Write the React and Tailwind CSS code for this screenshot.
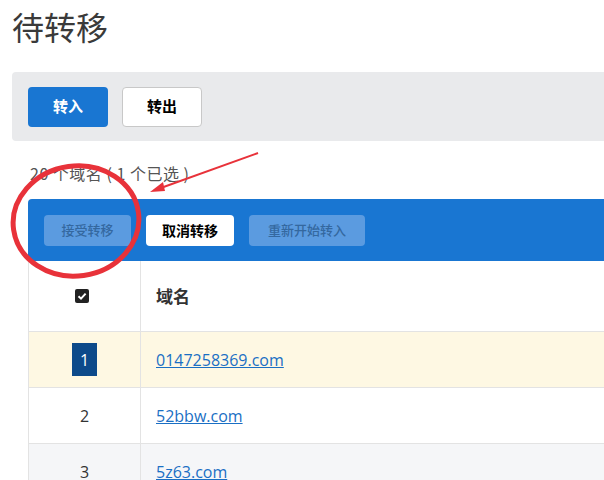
import React from 'react';

const rows = [
    { n: 1, domain: '0147258369.com', selected: true },
    { n: 2, domain: '52bbw.com' },
    { n: 3, domain: '5z63.com' },
];

const cjk = { fontFamily: '"Noto Sans CJK SC", "Open Sans", sans-serif' };

const App = () => {
    return (
        <div className="relative w-[604px] h-[480px] overflow-hidden bg-white text-[#333]" style={cjk}>
            <div className="pl-[12px]">
                {/* Title */}
                <h1 className="pt-[4px] h-[72px] text-[32px] leading-[44px] font-normal text-[#3a3a3a]">待转移</h1>

                {/* Transfer direction bar */}
                <div className="w-[700px] h-[69px] bg-[#e9eaec] rounded-[4px] flex items-center gap-[14px] px-[16px]">
                    <button className="w-[80px] h-[40px] rounded-[4px] bg-[#1976d2] text-white text-[15px] font-bold">转入</button>
                    <button className="w-[80px] h-[40px] rounded-[4px] bg-white border border-[#c8c8c8] text-black text-[15px] font-bold">转出</button>
                </div>

                <div className="pl-[16px]">
                    <p className="mt-[21px] h-[37px] pl-[2px] text-[16px] leading-[22px] text-[#555] tracking-[0.5px]">20 个域名 ( 1 个已选 )</p>

                    {/* Action bar */}
                    <div className="w-[700px] h-[62px] bg-[#1976d2] rounded-tl-[4px] flex items-center gap-[15px] px-[16px]">
                        <button className="w-[87px] h-[31px] rounded-[4px] bg-[#5b9be0] text-[#34689f] text-[13px] font-medium">接受转移</button>
                        <button className="w-[88px] h-[31px] rounded-[4px] bg-white text-black text-[14px] font-bold">取消转移</button>
                        <button className="w-[116px] h-[31px] rounded-[4px] bg-[#5b9be0] text-[#34689f] text-[13px] font-medium">重新开始转入</button>
                    </div>

                    {/* Table */}
                    <div className="w-[700px] border-l border-[#e3e3e3]">
                        <div className="flex h-[71px] border-b border-[#e3e3e3]">
                            <div className="w-[112px] flex items-center justify-center pr-[6px] border-r border-[#e3e3e3]">
                                <span className="w-[14px] h-[14px] rounded-[2px] bg-[#222] flex items-center justify-center">
                                    <svg width="10" height="10" viewBox="0 0 10 10">
                                        <path d="M1.5 5.2 L4 7.6 L8.6 2.6" stroke="white" strokeWidth="2" fill="none" />
                                    </svg>
                                </span>
                            </div>
                            <div className="flex items-center pl-[15px] text-[17px] font-bold text-[#333]">域名</div>
                        </div>
                        {rows.map((row, i) => (
                            <div
                                key={row.n}
                                className={`flex h-[56px] border-b border-[#e3e3e3] ${row.selected ? 'bg-[#fef8e3]' : i % 2 === 0 ? 'bg-[#f5f6f8]' : 'bg-white'}`}
                            >
                                <div className="w-[112px] flex items-center justify-center border-r border-[#e3e3e3]" style={{ fontFamily: '"Open Sans", sans-serif' }}>
                                    {row.selected ? (
                                        <span className="w-[25px] h-[33px] bg-[#0d4a8a] text-white text-[16px] flex items-center justify-center">{row.n}</span>
                                    ) : (
                                        <span className="text-[16px] text-[#333]">{row.n}</span>
                                    )}
                                </div>
                                <div className="flex items-center pl-[15px]">
                                    <a href="#" className="text-[16px] text-[#1a6fc4] underline" style={{ fontFamily: '"Open Sans", sans-serif' }}>{row.domain}</a>
                                </div>
                            </div>
                        ))}
                    </div>
                </div>
            </div>

            {/* Red annotation: circle and arrow */}
            <svg className="absolute left-0 top-0 pointer-events-none" width="604" height="480">
                <ellipse cx="76" cy="221" rx="63" ry="55" fill="none" stroke="#e8323a" strokeWidth="5" transform="rotate(-8 76 221)" />
                <line x1="258" y1="153" x2="158" y2="189" stroke="#e8323a" strokeWidth="2" />
                <path d="M150 192 L163 182 L165 191 Z" fill="#e8323a" />
            </svg>
        </div>
    );
};

export default App;
